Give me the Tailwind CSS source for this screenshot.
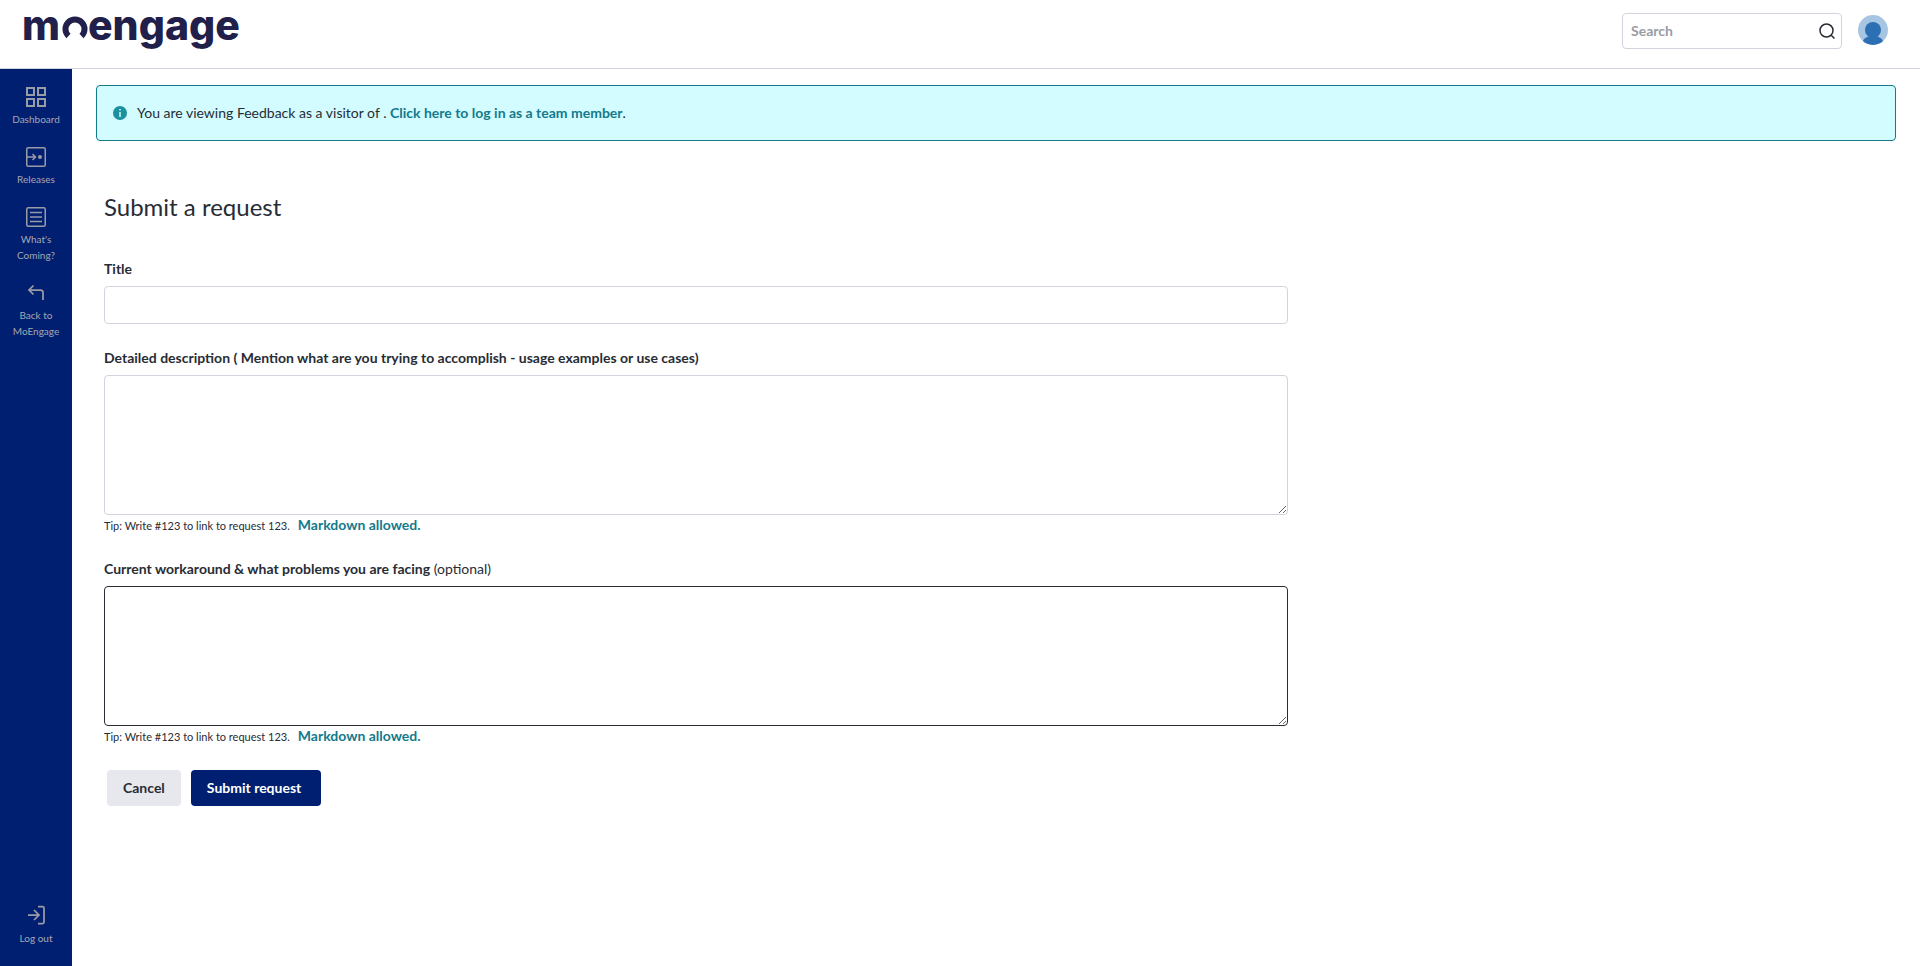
<!DOCTYPE html>
<html lang="en">
<head>
<meta charset="utf-8">
<meta name="viewport" content="width=device-width, initial-scale=1">
<title>Submit a request</title>
<script src="https://cdn.jsdelivr.net/npm/@tailwindcss/browser@4"></script>
</head>
<body class="flex min-h-screen flex-col bg-white font-['Lato','Liberation_Sans',sans-serif] text-sm leading-5 text-[#282c35]">
<header class="flex h-[69px] items-start justify-between border-b border-[#d2d3de] pl-5 pr-8">
  <a href="#" aria-label="MoEngage home">
    <svg width="232" height="56" viewBox="0 0 232 56" fill="#21204a" class="font-['Inter',sans-serif] text-[41px] font-extrabold">
      <text x="2" y="40">m</text>
      <path d="M48.500 36A9.500 9.500 0 1 1 61.500 36" fill="none" stroke="#21204a" stroke-width="6"/>
      <text x="68" y="40">engage</text>
    </svg>
  </a>
  <div class="flex items-start gap-4 pt-[13px]">
    <form class="flex h-9 w-[220px] items-center rounded border border-[#d2d3de] pl-2 pr-1.5">
      <input type="search" aria-label="Search" placeholder="Search" class="min-w-0 flex-1 font-bold outline-none placeholder:text-[#9a9ca5]">
      <button type="submit" aria-label="Search">
        <svg width="16" height="16" viewBox="0 0 16 16" fill="none" stroke="#282c35" stroke-width="1.500"><circle cx="7.500" cy="7.500" r="6.500"/><path d="M12 12l3.500 3.500"/></svg>
      </button>
    </form>
    <button type="button" aria-label="Account" class="mt-0.5">
      <svg width="30" height="30" viewBox="0 0 30 30"><defs><clipPath id="av"><circle cx="15" cy="15" r="15"/></clipPath></defs><g clip-path="url(#av)"><path fill="#a6c5e2" d="M0 0h30v30H0z"/><circle cx="15" cy="15" r="8" fill="#2c6fb3"/><path fill="#2c6fb3" d="M11 20c0 3-4 1-6 6v4h20v-4c-2-5-6-3-6-6z"/></g></svg>
    </button>
  </div>
</header>
<div class="flex flex-1">
  <nav class="flex w-[72px] shrink-0 flex-col justify-between bg-[#001f70] pb-5 pt-4 text-center text-[10px] leading-4 text-[#a5a7b4]">
    <div class="flex flex-col gap-[18px]">
      <a href="#" class="flex flex-col items-center gap-0.5">
        <svg width="24" height="24" viewBox="0 0 24 24" fill="none" stroke="#999ba5" stroke-width="2"><path d="M3 3h7v7h-7zM14 3h7v7h-7zM3 14h7v7h-7zM14 14h7v7h-7z"/></svg>
        <span>Dashboard</span>
      </a>
      <a href="#" class="flex flex-col items-center gap-0.5">
        <svg width="24" height="24" viewBox="0 0 24 24" fill="none" stroke="#999ba5" stroke-width="1.500"><rect x="2.750" y="2.750" width="18.500" height="18.500" rx="1.500"/><path d="M3 12h8M8.500 9l3 3-3 3"/><circle cx="16" cy="12" r="2" fill="#999ba5" stroke="none"/></svg>
        <span>Releases</span>
      </a>
      <a href="#" class="flex flex-col items-center gap-0.5">
        <svg width="24" height="24" viewBox="0 0 24 24" fill="none" stroke="#999ba5" stroke-width="1.500"><rect x="2.750" y="2.750" width="18.500" height="18.500" rx="1.500"/><path d="M6 7.500h12M6 12h12M6 16.500h12"/></svg>
        <span>What's<br>Coming?</span>
      </a>
      <a href="#" class="flex flex-col items-center gap-0.5">
        <svg width="24" height="24" viewBox="0 0 24 24" fill="none" stroke="#999ba5" stroke-width="1.750"><path d="M9.500 4.500L5 9l4.500 4.500M5 9h11.500a2.500 2.500 0 0 1 2.500 2.500V19"/></svg>
        <span>Back to<br>MoEngage</span>
      </a>
    </div>
    <a href="#" class="flex flex-col items-center gap-0.5">
      <svg width="24" height="24" viewBox="0 0 24 24" fill="none" stroke="#999ba5" stroke-width="1.750"><path d="M4 11h11M10 6l5 5-5 5M14 2.500h4.500a1.500 1.500 0 0 1 1.500 1.500v14a1.500 1.500 0 0 1-1.500 1.500H14"/></svg>
      <span>Log out</span>
    </a>
  </nav>
  <main class="min-w-0 flex-1 px-6 pt-4">
    <div class="flex h-14 items-center gap-2.5 rounded border border-[#147a8c] bg-[#d2fcff] px-4">
      <svg width="14" height="14" viewBox="0 0 14 14"><circle cx="7" cy="7" r="7" fill="#1b919f"/><path fill="#d2fcff" d="M6.250 3h1.500v1.500h-1.500zM6.250 6h1.500v5h-1.500z"/></svg>
      <p>You are viewing Feedback as a visitor of . <a href="#" class="font-bold text-[#147a8c]">Click here to log in as a team member</a>.</p>
    </div>
    <div class="pl-2 pr-4">
      <h1 class="mt-[50px] text-2xl leading-8">Submit a request</h1>
      <form class="mt-9 w-2/3">
        <label for="title" class="block font-bold">Title</label>
        <input id="title" type="text" class="mt-[7px] block h-[38px] w-full rounded border border-[#d2d3de] px-3">
        <label for="desc" class="mt-6 block font-bold">Detailed description ( Mention what are you trying to accomplish - usage examples or use cases)</label>
        <textarea id="desc" class="mt-[7px] block h-[140px] w-full resize rounded border border-[#d2d3de] p-3"></textarea>
        <p class="flex h-5 items-baseline gap-2"><span class="text-[11px] leading-5">Tip: Write #123 to link to request 123.</span><a href="#" class="font-bold text-[#147a8c]">Markdown allowed.</a></p>
        <label for="work" class="mt-6 block"><b>Current workaround &amp; what problems you are facing</b> (optional)</label>
        <textarea id="work" class="mt-[7px] block h-[140px] w-full resize rounded border border-[#282c35] p-3"></textarea>
        <p class="flex h-5 items-baseline gap-2"><span class="text-[11px] leading-5">Tip: Write #123 to link to request 123.</span><a href="#" class="font-bold text-[#147a8c]">Markdown allowed.</a></p>
        <div class="mt-6 flex gap-2.5 pl-[3px] font-bold">
          <button type="button" class="h-9 rounded bg-[#e7e8ee] px-4">Cancel</button>
          <button type="submit" class="h-9 rounded bg-[#001f70] pl-4 pr-5 text-white">Submit request</button>
        </div>
      </form>
    </div>
  </main>
</div>
</body>
</html>
